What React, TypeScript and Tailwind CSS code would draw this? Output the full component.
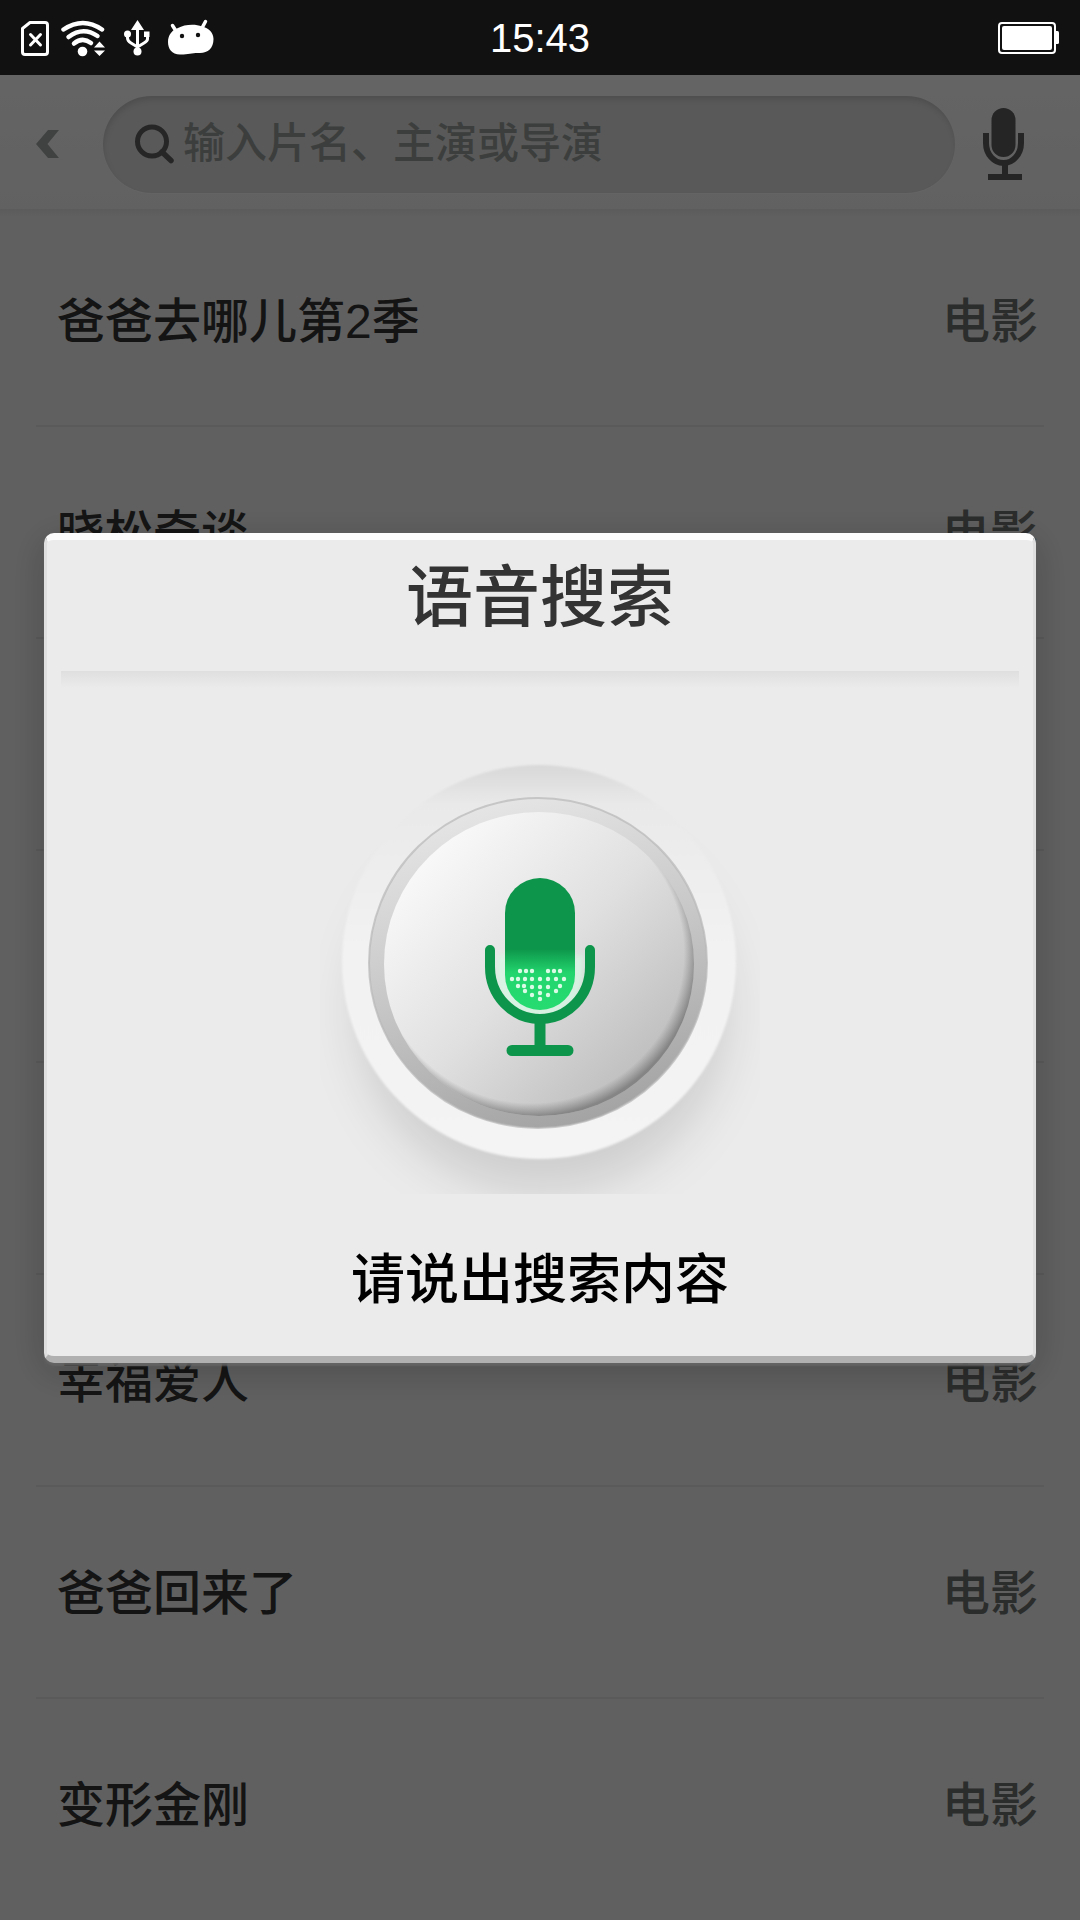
import React from "react";

const films = [
  { title: "爸爸去哪儿第2季", kind: "电影" },
  { title: "晓松奇谈", kind: "电影" },
  { title: "", kind: "" },
  { title: "", kind: "" },
  { title: "", kind: "" },
  { title: "幸福爱人", kind: "电影" },
  { title: "爸爸回来了", kind: "电影" },
  { title: "变形金刚", kind: "电影" },
];

function StatusBar() {
  return (
    <div className="relative z-20 flex h-[75px] items-center bg-[#111111] text-white">
      <div className="flex flex-1 items-center pl-5">
        <svg width="196" height="38" viewBox="20 18 196 38" fill="none" aria-hidden="true">
          <path d="M30 21.5H45a2.500 2.500 0 0 1 2.500 2.500V51a2.500 2.500 0 0 1-2.500 2.500H25a2.500 2.500 0 0 1-2.500-2.500V27.500Z" stroke="#fff" strokeWidth="3" strokeLinejoin="round" />
          <path d="M30.500 33.500l10 10.500M40.500 33.500l-10 10.500" stroke="#fff" strokeWidth="3" strokeLinecap="round" />
          <g stroke="#fff" strokeWidth="4.500" strokeLinecap="round">
            <path d="M63.500 28.500Q83 15.500 102 28.500" />
            <path d="M68.500 36Q83 25 97.500 35" />
            <path d="M74 42.500Q82.500 35.500 91 42" />
          </g>
          <circle cx="82.500" cy="50.500" r="4.800" fill="#fff" />
          <path d="M94 46.500L99.500 40.500L105 46.500ZM94 49.500L99.500 55L105 49.500Z" fill="#fff" />
          <path d="M137.500 19L144 29H131ZM144 30.500h5.500v5.500H144Z" fill="#fff" />
          <path d="M137.500 28V50M127.500 34V37Q127.500 40 131 42L137.500 46M147.500 35V38Q147.500 40 144 42L137.500 46" stroke="#fff" strokeWidth="3" />
          <circle cx="127.500" cy="33" r="3.500" fill="#fff" />
          <circle cx="137.500" cy="50.500" r="4" fill="#fff" />
          <path d="M178 27C184 23.500 195 22.500 202 25.500C209 27 213.500 32 213.500 38C213.500 47 208 52 200 52C193 51.500 189 53.500 181 53.500C172 54 168 48 168 41C168 34 172 29 178 27Z" fill="#fff" />
          <path d="M172.500 24.500L176 30M205.500 20.500L202 27" stroke="#fff" strokeWidth="3.500" strokeLinecap="round" />
          <circle cx="182" cy="35" r="2.200" fill="#111" />
          <circle cx="198" cy="34" r="2.200" fill="#111" />
        </svg>
      </div>
      <time className="text-[40px] leading-[48px]">15:43</time>
      <div className="flex flex-1 justify-end pr-5">
        <svg width="62" height="32" viewBox="0 0 62 32" fill="none" aria-label="电量">
          <rect x="1" y="1" width="56" height="30" rx="3" stroke="#fff" strokeWidth="2" />
          <rect x="4" y="4" width="50" height="24" rx="2" fill="#fff" />
          <path d="M58 9h1.500a1.500 1.500 0 0 1 1.500 1.500v10a1.500 1.500 0 0 1-1.500 1.500H58Z" fill="#fff" />
        </svg>
      </div>
    </div>
  );
}

function SearchHeader() {
  return (
    <header className="flex h-[134px] items-center bg-linear-to-b from-[#fafafa] to-[#f3f3f3] pt-1 pr-14 pl-9">
      <button type="button" aria-label="返回" className="w-[67px]">
        <svg width="23" height="28" viewBox="0 0 23 28" fill="#9fa6a4">
          <path d="M12 0H23L11.500 14L23 28H12L0 14Z" />
        </svg>
      </button>
      <label className="flex h-[97px] min-w-0 flex-1 items-center rounded-full bg-[#dedede] pl-8 shadow-[inset_1px_4px_6px_-1px_rgba(0,0,0,0.14),0_1px_1px_rgba(255,255,255,0.6)]">
        <svg width="40" height="40" viewBox="0 0 40 40" fill="none" stroke="#606060" className="shrink-0">
          <circle cx="17" cy="17.500" r="14.500" strokeWidth="5" />
          <path d="M27 28L36 36.500" strokeWidth="5.500" strokeLinecap="round" />
        </svg>
        <input
          type="text"
          aria-label="搜索"
          placeholder="输入片名、主演或导演"
          className="ml-2 min-w-0 flex-1 bg-transparent text-[42px] leading-[60px] font-medium outline-none placeholder:text-[#969c99]"
        />
      </label>
      <button type="button" aria-label="语音" className="ml-7">
        <svg width="41" height="72" viewBox="0 0 41 72" fill="none">
          <rect x="8.500" y="0" width="24" height="49" rx="12" fill="#5c5c5c" />
          <path d="M3 25V35a17.500 20 0 0 0 35 0V25" stroke="#5c5c5c" strokeWidth="6" />
          <path d="M19 56h6v10h14v6H5v-6h14Z" fill="#5c5c5c" />
        </svg>
      </button>
    </header>
  );
}

const dots: [number, number][] = [
  [36, 93], [42, 93], [48, 93], [64, 93], [70, 93], [76, 93],
  [28, 101], [34, 101], [41, 101], [48, 101], [56, 101], [64, 101], [72, 101], [80, 101],
  [34, 108], [40, 108], [48, 109], [56, 109], [64, 109], [76, 108],
  [41, 113], [48, 117], [56, 115], [64, 117], [72, 113], [56, 121],
];

function VoiceButton() {
  return (
    <svg width="440" height="454" viewBox="320 740 440 454" className="w-[440px]" aria-hidden="true">
      <defs>
        <linearGradient id="rim" x1="0" y1="0" x2="0" y2="1">
          <stop offset="0" stopColor="#d8d8d8" />
          <stop offset="0.100" stopColor="#e9e9e9" />
          <stop offset="0.450" stopColor="#f2f2f2" />
          <stop offset="1" stopColor="#f4f4f4" />
        </linearGradient>
        <linearGradient id="ring" x1="0.350" y1="0" x2="0.650" y2="1">
          <stop offset="0" stopColor="#e6e6e6" />
          <stop offset="0.500" stopColor="#c6c6c6" />
          <stop offset="1" stopColor="#a2a2a2" />
        </linearGradient>
        <linearGradient id="face" x1="0.150" y1="0.150" x2="0.850" y2="0.850">
          <stop offset="0" stopColor="#f8f8f8" />
          <stop offset="0.500" stopColor="#e0e0e0" />
          <stop offset="1" stopColor="#bebebe" />
        </linearGradient>
        <radialGradient id="edge" cx="0.475" cy="0.465" r="0.535">
          <stop offset="0.920" stopColor="#777" stopOpacity="0" />
          <stop offset="1" stopColor="#6c6c6c" stopOpacity="0.700" />
        </radialGradient>
        <linearGradient id="body" x1="0" y1="0" x2="0" y2="1">
          <stop offset="0" stopColor="#0d964b" />
          <stop offset="0.540" stopColor="#0d964b" />
          <stop offset="0.720" stopColor="#23d56d" />
          <stop offset="1" stopColor="#26dc71" />
        </linearGradient>
        <filter id="shade" x="-30%" y="-30%" width="160%" height="160%"><feGaussianBlur stdDeviation="24" /></filter>
        <filter id="soft" x="-20%" y="-20%" width="140%" height="140%"><feGaussianBlur stdDeviation="3" /></filter>
        <filter id="softRim" x="-20%" y="-20%" width="140%" height="140%"><feGaussianBlur stdDeviation="1" /></filter>
      </defs>
      <ellipse cx="542" cy="1010" rx="186" ry="184" fill="#000" fillOpacity="0.120" filter="url(#shade)" />
      <circle cx="539" cy="962" r="197" fill="url(#rim)" filter="url(#softRim)" />
      <ellipse cx="538" cy="963" rx="169" ry="165" fill="url(#ring)" stroke="#b8b8b8" strokeOpacity="0.700" strokeWidth="2" />
      <ellipse cx="539" cy="964" rx="155" ry="152" fill="url(#face)" />
      <ellipse cx="539" cy="964" rx="155" ry="152" fill="url(#edge)" />
      <path d="M502 955V975a38 37 0 0 0 76 0V955" fill="none" stroke="#d6fae4" strokeWidth="9" strokeOpacity="0.900" filter="url(#soft)" />
      <rect x="505" y="878" width="70" height="132" rx="35" fill="url(#body)" />
      <path d="M490 950V967a50 52 0 0 0 100 0V950" fill="none" stroke="#0d964b" strokeWidth="10" strokeLinecap="round" />
      <path d="M540 1020V1050M512 1050.500H568" stroke="#0d964b" strokeWidth="11" strokeLinecap="round" />
      <g fill="#dcfbe7">
        {dots.map(([x, y]) => (
          <circle key={`${x}-${y}`} cx={x + 484} cy={y + 878} r="2.200" />
        ))}
      </g>
    </svg>
  );
}

function VoiceDialog() {
  return (
    <div className="fixed inset-0 z-10 flex items-center bg-black/60 px-11 pb-6">
      <section
        role="dialog"
        aria-labelledby="voice-title"
        className="flex w-full flex-col items-center rounded-[10px] border-x-[3px] border-t-[7px] border-b-[7px] border-x-[#dfdfdf] border-t-[#fbfbfb] border-b-[#b0b0b0] bg-[#ebebeb] px-[14px] shadow-[0_3px_2px_rgba(100,100,100,0.9),0_8px_36px_rgba(0,0,0,0.22)]"
      >
        <h2 id="voice-title" className="pt-2 pb-6 text-[67px] leading-[99px] font-medium text-[#333333]">
          语音搜索
        </h2>
        <div className="h-[17px] w-full bg-linear-to-b from-[#dfdfdf] to-[#ebebeb]" />
        <div className="mt-[52px]">
          <VoiceButton />
        </div>
        <p className="mt-[46px] pb-9 text-[54px] leading-[80px] font-medium text-black">请说出搜索内容</p>
      </section>
    </div>
  );
}

export default function App() {
  return (
    <div className="min-h-screen overflow-hidden bg-[#f0f0f0] font-['Liberation_Sans','Noto_Sans_CJK_SC',sans-serif]">
      <StatusBar />
      <SearchHeader />
      <main className="bg-linear-to-b from-[#e4e4e4] to-[#f0f0f0] to-[8px] px-9 pt-1.5">
        <ul>
          {films.map((film, i) => (
            <li
              key={i}
              className="flex h-[212px] items-center justify-between border-b-2 border-[#e0e0e0] pt-1 pr-1.5 pl-[21px] last:border-transparent"
            >
              <span className="text-[48px] leading-[72px] font-medium text-[#343434]">{film.title}</span>
              <span className="text-[48px] leading-[72px] font-medium text-[#6c706e]">{film.kind}</span>
            </li>
          ))}
        </ul>
      </main>
      <VoiceDialog />
    </div>
  );
}
